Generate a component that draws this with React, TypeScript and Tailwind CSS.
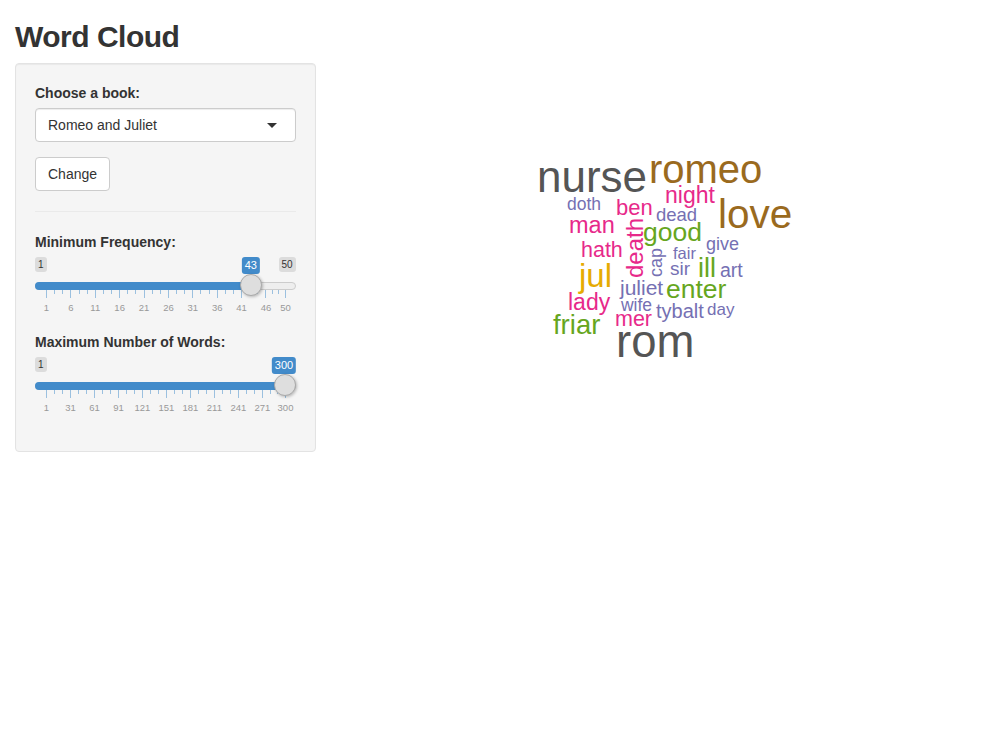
import { useState } from "react";

const GRAY = "#555555";
const BROWN = "#9a6a1e";
const PINK = "#e7298a";
const PURPLE = "#7570b3";
const GREEN = "#66a61e";
const YELLOW = "#e6ab02";

// canvas origin (left edge of main column, top of the row)
const OX = 345.67;
const OY = 63;
const ASC = 0.8465;

interface Word {
  t: string;
  x: number; // left edge (or baseline x when rotated)
  y: number; // baseline (or bottom edge when rotated)
  s: number;
  c: string;
  r?: boolean;
}

const WORDS: Word[] = [
  { t: "nurse", x: 537, y: 192, s: 44, c: GRAY },
  { t: "romeo", x: 649, y: 183, s: 40, c: BROWN },
  { t: "night", x: 665, y: 203, s: 23, c: PINK },
  { t: "doth", x: 567, y: 211, s: 17.5, c: PURPLE },
  { t: "ben", x: 616, y: 216, s: 22, c: PINK },
  { t: "dead", x: 656, y: 222, s: 18.5, c: PURPLE },
  { t: "love", x: 718, y: 228, s: 40.5, c: BROWN },
  { t: "man", x: 569, y: 234, s: 23.5, c: PINK },
  { t: "good", x: 643, y: 241, s: 26.5, c: GREEN },
  { t: "give", x: 706, y: 250, s: 18, c: PURPLE },
  { t: "hath", x: 581, y: 258, s: 21.5, c: PINK },
  { t: "fair", x: 673, y: 259, s: 16.5, c: PURPLE },
  { t: "death", x: 643, y: 278, s: 24, c: PINK, r: true },
  { t: "cap", x: 662, y: 277, s: 18, c: PURPLE, r: true },
  { t: "jul", x: 579, y: 287, s: 33, c: YELLOW },
  { t: "sir", x: 670, y: 275, s: 19, c: PURPLE },
  { t: "ill", x: 698, y: 278, s: 27, c: GREEN },
  { t: "art", x: 720, y: 278, s: 19.5, c: PURPLE },
  { t: "juliet", x: 620, y: 295, s: 21, c: PURPLE },
  { t: "enter", x: 666, y: 298, s: 26.5, c: GREEN },
  { t: "lady", x: 568, y: 310, s: 23, c: PINK },
  { t: "wife", x: 621, y: 312, s: 17.5, c: PURPLE },
  { t: "day", x: 707, y: 315, s: 17, c: PURPLE },
  { t: "tybalt", x: 656, y: 318, s: 20, c: PURPLE },
  { t: "mer", x: 615, y: 327, s: 21.5, c: PINK },
  { t: "friar", x: 553, y: 334, s: 27.5, c: GREEN },
  { t: "rom", x: 616, y: 358, s: 45.5, c: GRAY },
];

function WordCloud() {
  return (
    <div className="relative h-[400px] w-full">
      {WORDS.map((w) =>
        w.r ? (
          <span
            key={w.t}
            className="absolute whitespace-nowrap leading-none"
            style={{
              left: w.x - ASC * w.s - OX,
              top: w.y - OY,
              fontSize: w.s,
              color: w.c,
              transform: "rotate(-90deg)",
              transformOrigin: "0 0",
            }}
          >
            {w.t}
          </span>
        ) : (
          <span
            key={w.t}
            className="absolute whitespace-nowrap leading-none"
            style={{ left: w.x - OX, top: w.y - ASC * w.s - OY, fontSize: w.s, color: w.c }}
          >
            {w.t}
          </span>
        )
      )}
    </div>
  );
}

interface SliderProps {
  min: number;
  max: number;
  value: number;
  majors: number[];
}

// track is 261px wide, handle travel 239px starting at 11px
function Slider({ min, max, value, majors }: SliderProps) {
  const pos = (v: number) => 11 + ((v - min) / (max - min)) * 239;
  const smalls: number[] = [];
  for (let i = 0; i < majors.length - 1; i++) {
    const a = pos(majors[i]);
    const b = pos(majors[i + 1]);
    smalls.push(a + (b - a) / 3, a + ((b - a) * 2) / 3);
  }
  const p = pos(value);
  const atEnd = value === max;

  return (
    <div className="relative h-[60px] w-full">
      <div className="flex items-start justify-between">
        <span className="rounded-[3px] bg-black/10 px-[3px] py-px text-[10px] leading-[1.333] text-[#333]">{min}</span>
        {!atEnd && (
          <span className="rounded-[3px] bg-black/10 px-[3px] py-px text-[10px] leading-[1.333] text-[#333]">
            {max}
          </span>
        )}
      </div>
      <span
        className="absolute top-0 -translate-x-1/2 rounded-[3px] bg-[#428bca] px-[3px] py-px text-[11px] leading-[1.333] text-white"
        style={{ left: atEnd ? p - 1 : p }}
      >
        {value}
      </span>

      <div className="absolute left-0 right-0 top-[25px] h-2 rounded-full border border-[#ccc] bg-[#eee]" />
      <div className="absolute left-0 top-[25px] h-2 rounded-l-full bg-[#428bca]" style={{ width: p }} />

      {majors.map((m) => (
        <div key={"t" + m}>
          <div className="absolute top-[33px] h-2 w-px bg-[#428bca]/50" style={{ left: pos(m) }} />
          <span
            className="absolute top-[45px] -translate-x-1/2 text-[9.5px] leading-[12px] text-[#999]"
            style={{ left: pos(m) + 0.5 }}
          >
            {m}
          </span>
        </div>
      ))}
      {smalls.map((s, i) => (
        <div key={"s" + i} className="absolute top-[33px] h-1 w-px bg-[#428bca]/50" style={{ left: Math.round(s) }} />
      ))}

      <div
        className="absolute top-[17px] h-[22px] w-[22px] -translate-x-1/2 rounded-full border border-[#aaa] bg-[#dedede] shadow-[1px_1px_3px_rgba(0,0,0,0.25)]"
        style={{ left: p }}
      />
    </div>
  );
}

export default function App() {
  const [book] = useState("Romeo and Juliet");

  return (
    <div className="min-h-screen bg-white px-[15px] font-['Liberation_Sans',Arial,sans-serif] text-[14px] leading-[20px] text-[#333]">
      <h2 className="mb-[10px] mt-[20px] text-[30px] font-bold leading-[1.1] tracking-[-0.5px]">Word Cloud</h2>

      <div className="-mx-[15px] flex">
        {/* Sidebar */}
        <div className="w-1/3 px-[15px]">
          <div className="flex flex-col rounded border border-[#e3e3e3] bg-[#f5f5f5] p-[19px] shadow-[inset_0_1px_1px_rgba(0,0,0,0.05)]">
            <div className="mb-[15px] flex flex-col gap-[5px]">
              <label className="font-bold">Choose a book:</label>
              <div className="flex h-[34px] items-center justify-between rounded border border-[#ccc] bg-white pl-3 pr-[18px] shadow-[inset_0_1px_1px_rgba(0,0,0,0.075)]">
                <span className="text-[#333]">{book}</span>
                <span className="h-0 w-0 border-x-[5px] border-t-[5px] border-x-transparent border-t-[#333]" />
              </div>
            </div>

            <button className="h-[34px] self-start rounded border border-[#ccc] bg-white px-3 text-[#333]">Change</button>

            <hr className="my-5 border-t border-[#eaeaea]" />

            <div className="mb-[15px] flex flex-col gap-[5px]">
              <label className="font-bold">Minimum Frequency:</label>
              <Slider min={1} max={50} value={43} majors={[1, 6, 11, 16, 21, 26, 31, 36, 41, 46, 50]} />
            </div>

            <div className="mb-[15px] flex flex-col gap-[5px]">
              <label className="font-bold">Maximum Number of Words:</label>
              <Slider
                min={1}
                max={300}
                value={300}
                majors={[1, 31, 61, 91, 121, 151, 181, 211, 241, 271, 300]}
              />
            </div>
          </div>
        </div>

        {/* Main panel */}
        <div className="w-2/3 px-[15px]">
          <WordCloud />
        </div>
      </div>
    </div>
  );
}
